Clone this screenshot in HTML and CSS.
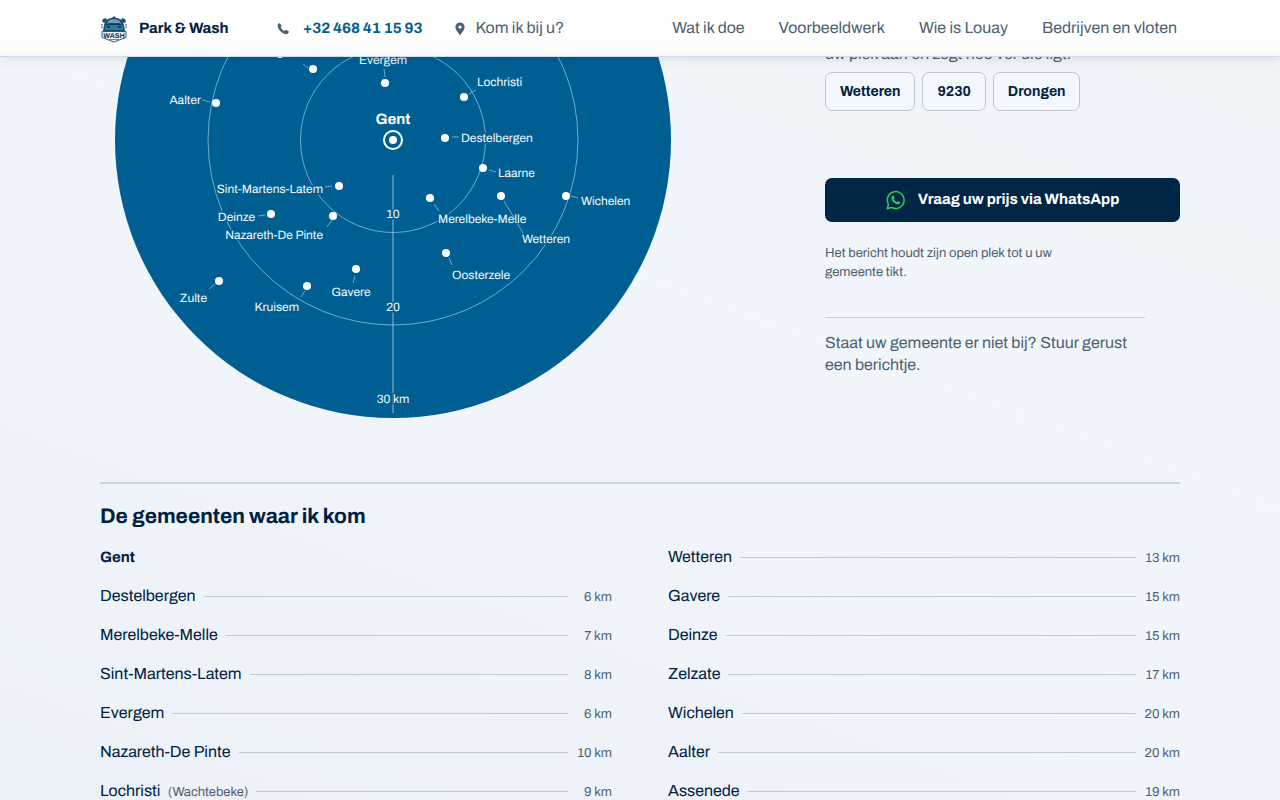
FILE: index.html
```html
<!DOCTYPE html>
<html lang="nl">
<head>
<meta charset="utf-8">
<meta name="viewport" content="width=device-width, initial-scale=1">
<title>Park &amp; Wash</title>
<link rel="stylesheet" href="styles.css">
</head>
<body>
<header class="site-header">
  <div class="wrap header-row">
    <a class="brand" href="#">
      <svg class="brand-logo" viewBox="0 0 28 28" aria-hidden="true">
        <path d="M14 1l2 2-2 1-2-1zM3 4l3-1 1 3-3 2-2-2zM22 3l3 1 1 3-2 1-3-2z" fill="#16547c"/>
        <path d="M6 5q8-5 16 0l2 5 1 6H3l1-6z" fill="#174b6d"/>
        <path d="M8 6q6-4 12 0l1 3H7z" fill="#6f9db9"/>
        <path d="M5 11q9-3 18 0v4H5z" fill="#2f78a2"/>
        <path d="M7 12h3M18 12h3M8 9h12" stroke="#062b46" stroke-width="1.4"/>
        <path d="M2 9v5M26 9v5" stroke="#416b84" stroke-width="1.4" stroke-dasharray="1.5 1"/>
        <path d="M2 16.500h24v6l-4 1.500-8 3-8-3-4-1.500z" fill="#eaf1f5" stroke="#315b75"/>
        <path d="M9 24.500h10" stroke="#6d899b"/>
        <text class="logo-word" x="14" y="22.5" text-anchor="middle">WASH</text>
      </svg>
      <span>Park &amp; Wash</span>
    </a>
    <a class="phone" href="tel:+32468411593">
      <svg class="phone-icon" viewBox="0 0 12 12" aria-hidden="true"><path d="M1 1.2Q2-.1 3.2.6l1.2 2.3q.3.8-.7 1.5 1.3 2.5 3.8 3.5.9-1.2 1.8-.8l2 1q.8.7.1 1.9-1 1.7-3 1.2Q2 9.500.7 3.600.4 2.200 1 1.200z" fill="#4a6274"/></svg>
      <span>+32 468 41 15 93</span>
    </a>
    <a class="visit" href="#gemeenten">
      <svg class="pin-icon" viewBox="0 0 10 14" aria-hidden="true"><path fill-rule="evenodd" d="M5 .5a4.600 4.600 0 0 0-4.600 4.600C.4 8.300 3.700 11 5 13.500 6.300 11 9.600 8.300 9.600 5.100A4.600 4.600 0 0 0 5 .5zm0 2.900a1.700 1.700 0 1 1 0 3.400 1.700 1.700 0 0 1 0-3.400z" fill="#46627a"/></svg>
      <span>Kom ik bij u?</span>
    </a>
    <nav class="main-nav" aria-label="Hoofdmenu">
      <a href="#">Wat ik doe</a>
      <a href="#">Voorbeeldwerk</a>
      <a href="#">Wie is Louay</a>
      <a href="#">Bedrijven en vloten</a>
    </nav>
  </div>
</header>
<main class="wrap">
  <section class="area">
    <svg class="map" viewBox="-278 -83 556 361" role="img" aria-label="Kaart met gemeenten rond Gent">
      <circle class="disc" r="278"/>
      <circle class="ring" r="185"/>
      <circle class="ring" r="92.500"/>
      <path class="axis" d="M0 35V273"/>
      <g class="leads">
        <path d="M-90-76l5 4M-191-40l8 2M-9-71l1 8M76-46l7-4M59-3h7M96 30l7 2M178 56l7 2M41 64l5 7M-68 47l7-1M-135 76l7-1M-66 87l5-7M-184 149l6-5M-92 157l4-6M-40 143l2-7M56 118l3 7"/>
      </g>
      <g class="dots">
        <circle cx="-113" cy="-86" r="4"/><circle cx="-80" cy="-71" r="4"/><circle cx="-177" cy="-37" r="4"/><circle cx="-8" cy="-57" r="4"/>
        <circle cx="71" cy="-43" r="4"/><circle cx="52" cy="-2" r="4"/><circle cx="90" cy="28" r="4"/><circle cx="173" cy="56" r="4"/>
        <circle cx="108" cy="56" r="4"/><circle cx="37" cy="58" r="4"/><circle cx="-54" cy="46" r="4"/><circle cx="-60" cy="76" r="4"/>
        <circle cx="-122" cy="74" r="4"/><circle cx="-174" cy="141" r="4"/><circle cx="-86" cy="146" r="4"/><circle cx="-37" cy="129" r="4"/>
        <circle cx="53" cy="113" r="4"/><circle r="4"/>
      </g>
      <circle class="home" r="9"/>
      <g class="labels">
        <text class="mid" x="-10" y="-76">Evergem</text>
        <text class="end" x="-192" y="-36">Aalter</text>
        <text x="84" y="-54">Lochristi</text>
        <text x="68" y="2">Destelbergen</text>
        <text x="105" y="37">Laarne</text>
        <text x="188" y="65">Wichelen</text>
        <text x="45" y="83">Merelbeke-Melle</text>
        <text x="129" y="103">Wetteren</text>
        <text class="end" x="-70" y="53">Sint-Martens-Latem</text>
        <text class="end" x="-138" y="81">Deinze</text>
        <text class="end" x="-70" y="99">Nazareth-De Pinte</text>
        <text class="end" x="-186" y="162">Zulte</text>
        <text class="end" x="-94" y="171">Kruisem</text>
        <text class="mid" x="-42" y="156">Gavere</text>
        <text x="59" y="139">Oosterzele</text>
        <text class="mid" x="0" y="78">10</text>
        <text class="mid" x="0" y="171">20</text>
        <text class="mid" x="0" y="263">30 km</text>
        <text class="mid city" x="0" y="-16">Gent</text>
      </g>
      <path class="leads" d="M111 61l19 32"/>
    </svg>
    <aside class="ask">
      <p class="intro">uw plek aan en zegt hoe ver die ligt.</p>
      <div class="chips">
        <button type="button">Wetteren</button>
        <button type="button">9230</button>
        <button type="button">Drongen</button>
      </div>
      <a class="whatsapp" href="#">
        <svg class="wa-icon" viewBox="0 0 20 20" aria-hidden="true">
          <path d="M2.500 14.300A8.400 8.400 0 1 1 5.700 17.400L1.300 18.700z" fill="none" stroke="#25d366" stroke-width="1.500" stroke-linejoin="round"/>
          <path d="M6.300 5.900c.5-.5 1-.4 1.300.1l.7 1.700c.1.400-.4.900-.7 1.200.8 1.500 1.900 2.600 3.500 3.200.4-.4.700-1 1.100-.9l1.700.8c.5.300.2 1.100-.2 1.600-.8.800-2 .9-3.200.5-2.500-1-4.500-3.100-5-5.200-.2-1.100.1-2.300.8-3z" fill="#25d366"/>
        </svg>
        <span>Vraag uw prijs via WhatsApp</span>
      </a>
      <p class="hint">Het bericht houdt zijn open plek tot u uw gemeente tikt.</p>
      <p class="missing">Staat uw gemeente er niet bij? Stuur gerust een berichtje.</p>
    </aside>
  </section>
  <section class="places" id="gemeenten">
    <h2>De gemeenten waar ik kom</h2>
    <div class="columns">
      <ul>
        <li><strong>Gent</strong></li>
        <li><span>Destelbergen</span><i></i><b>6 km</b></li>
        <li><span>Merelbeke-Melle</span><i></i><b>7 km</b></li>
        <li><span>Sint-Martens-Latem</span><i></i><b>8 km</b></li>
        <li><span>Evergem</span><i></i><b>6 km</b></li>
        <li><span>Nazareth-De Pinte</span><i></i><b>10 km</b></li>
        <li><span>Lochristi <small>(Wachtebeke)</small></span><i></i><b>9 km</b></li>
      </ul>
      <ul>
        <li><span>Wetteren</span><i></i><b>13 km</b></li>
        <li><span>Gavere</span><i></i><b>15 km</b></li>
        <li><span>Deinze</span><i></i><b>15 km</b></li>
        <li><span>Zelzate</span><i></i><b>17 km</b></li>
        <li><span>Wichelen</span><i></i><b>20 km</b></li>
        <li><span>Aalter</span><i></i><b>20 km</b></li>
        <li><span>Assenede</span><i></i><b>19 km</b></li>
      </ul>
    </div>
  </section>
</main>
</body>
</html>
```
FILE: styles.css
```css
* { box-sizing: border-box; }
body {
  margin: 0;
  font-family: Archivo, "Liberation Sans", Arial, sans-serif;
  font-size: 15px;
  line-height: 22px;
  text-rendering: geometricPrecision;
  color: #4c6171;
  background: linear-gradient(20deg, #ebf1f8 0%, #eff4fa 30%, #f1f6fc 60%, #f0f4f9 100%);
}
a { color: inherit; text-decoration: none; }
p, h2, ul { margin: 0; padding: 0; }
.wrap { width: 100%; max-width: 1128px; margin: 0 auto; padding: 0 24px; }

.site-header {
  position: sticky;
  top: 0;
  z-index: 2;
  background: linear-gradient(#fff 65%, #f7f8f9);
  border-bottom: 1px solid #d3dbe0;
  box-shadow: 0 2px 10px rgba(0, 38, 70, 0.1);
}
.header-row { display: flex; align-items: center; height: 56px; padding-top: 1px; white-space: nowrap; }
.header-row a { display: flex; align-items: center; }
.brand { gap: 11px; color: #00213f; font-weight: 700; }
.brand-logo { width: 28px; height: 28px; }
.logo-word { font-size: 7px; font-weight: 700; fill: #123c58; }
.phone { gap: 14px; margin-left: 48px; color: #005f92; font-weight: 700; }
.phone-icon { width: 12px; height: 12px; }
.visit { gap: 10px; margin-left: 33px; font-size: 16px; }
.pin-icon { width: 10px; height: 14px; }
.main-nav { display: flex; gap: 34px; margin-left: auto; padding-right: 3px; font-size: 16px; }

.area { display: grid; grid-template-columns: 586fr 355fr; column-gap: 139px; align-items: start; }
.map { display: block; width: 100%; padding: 0 15px; }
.disc { fill: #005f92; }
.ring, .axis, .leads { fill: none; stroke: #6fabd2; stroke-width: 1; }
.axis { stroke: #8dbbd9; }
.dots { fill: #fff; }
.home { fill: none; stroke: #fff; stroke-width: 2; }
.labels { font-size: 12px; fill: #eff7fc; stroke: #005f92; stroke-width: 3; paint-order: stroke; }
.mid { text-anchor: middle; }
.end { text-anchor: end; }
.city { font-size: 15px; font-weight: 700; fill: #fff; }

.intro { margin-top: -13px; font-size: 16px; white-space: nowrap; }
.chips { display: flex; gap: 7px; margin-top: 6px; }
.chips button {
  height: 39px;
  padding: 0 14px;
  font: 700 14px/20px Archivo, "Liberation Sans", Arial, sans-serif;
  color: #00213f;
  background: #f2f7fd;
  border: 1px solid #bec6cd;
  border-radius: 7px;
}
.whatsapp {
  display: flex;
  align-items: center;
  justify-content: center;
  gap: 12px;
  height: 44px;
  margin-top: 67px;
  color: #fff;
  font-weight: 700;
  background: #002646;
  border-radius: 7px;
}
.wa-icon { width: 20px; height: 20px; }
.hint { max-width: 260px; margin-top: 22px; font-size: 13px; line-height: 19px; }
.missing { max-width: 320px; margin-top: 35px; padding-top: 15px; font-size: 16px; border-top: 1px solid #c3cbd3; }

.places { margin-top: 64px; padding-top: 19px; border-top: 2px solid #ccd4dc; }
.places h2 { font-size: 21px; line-height: 28px; color: #00213f; }
.columns { display: grid; grid-template-columns: 1fr 1fr; column-gap: 56px; margin-top: 7px; }
.columns ul { list-style: none; }
.columns li { display: flex; align-items: center; height: 39px; font-size: 16px; color: #00213f; }
.columns strong { font-size: 15px; }
.columns i { flex: 1; height: 1px; margin-left: 8px; background: #c0c8d1; }
.columns b { width: 44px; font-size: 13px; font-weight: 400; text-align: right; color: #4c6171; }
.columns small { margin-left: 4px; font-size: 13px; color: #4c6171; }
```
